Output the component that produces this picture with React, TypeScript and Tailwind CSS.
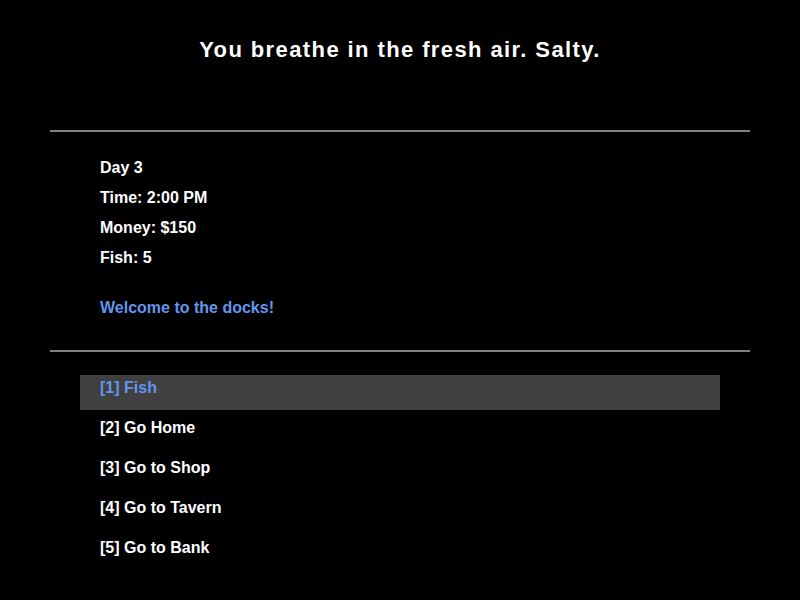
import { useState } from 'react';

const stats = ['Day 3', 'Time: 2:00 PM', 'Money: $150', 'Fish: 5'];
const options = ['Fish', 'Go Home', 'Go to Shop', 'Go to Tavern', 'Go to Bank'];

export default function App() {
  const [selected, setSelected] = useState(0);

  return (
    <div className="h-[600px] w-full bg-black text-white font-['Liberation_Sans',Arial,sans-serif] font-bold px-[50px]">
      <div className="h-[100px] flex items-center justify-center mb-[30px]">
        <h1 className="text-[22px] tracking-[1.4px] leading-none">You breathe in the fresh air. Salty.</h1>
      </div>

      <div className="h-[2px] bg-[#808080]" />

      <div className="pl-[50px] pt-[21px] text-[16px]">
        {stats.map((s) => (
          <div key={s} className="leading-[30px]">{s}</div>
        ))}
        <div className="leading-[30px] mt-[20px] text-[#6495ed]">Welcome to the docks!</div>
      </div>

      <div className="h-[2px] bg-[#808080] mt-[27px]" />

      <div className="px-[30px] pt-[23px] text-[16px]">
        {options.map((o, i) => (
          <div
            key={o}
            onMouseEnter={() => setSelected(i)}
            className={`h-[35px] mb-[5px] pl-[20px] pt-[4px] leading-[18px] ${
              selected === i ? 'bg-[#404040] text-[#6495ed]' : 'text-white'
            }`}
          >
            [{i + 1}] {o}
          </div>
        ))}
      </div>
    </div>
  );
}
